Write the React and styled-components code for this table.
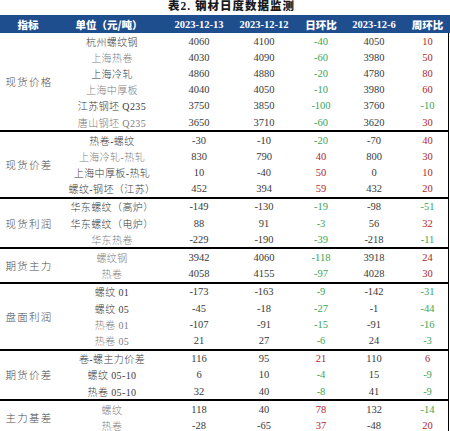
import React from "react";
import styled, { createGlobalStyle } from "styled-components";

const GlobalStyle = createGlobalStyle`
  body {
    margin: 0;
    background: #fff;
  }
`;

const COLS = "56px 106px 74px 56px 58px 48px 51px";

const groups = [
  {
    name: "现货价格",
    rows: [
      ["杭州螺纹钢", 0, 4060, 4100, -40, 4050, 10],
      ["上海热卷", 1, 4030, 4090, -60, 3980, 50],
      ["上海冷轧", 0, 4860, 4880, -20, 4780, 80],
      ["上海中厚板", 1, 4040, 4050, -10, 3980, 60],
      ["江苏钢坯 Q235", 0, 3750, 3850, -100, 3760, -10],
      ["唐山钢坯 Q235", 1, 3650, 3710, -60, 3620, 30],
    ],
  },
  {
    name: "现货价差",
    rows: [
      ["热卷-螺纹", 0, -30, -10, -20, -70, 40],
      ["上海冷轧-热轧", 1, 830, 790, 40, 800, 30],
      ["上海中厚板-热轧", 0, 10, -40, 50, 0, 10],
      ["螺纹-钢坯（江苏）", 0, 452, 394, 59, 432, 20],
    ],
  },
  {
    name: "现货利润",
    rows: [
      ["华东螺纹（高炉）", 0, -149, -130, -19, -98, -51],
      ["华东螺纹（电炉）", 0, 88, 91, -3, 56, 32],
      ["华东热卷", 1, -229, -190, -39, -218, -11],
    ],
  },
  {
    name: "期货主力",
    rows: [
      ["螺纹钢", 1, 3942, 4060, -118, 3918, 24],
      ["热卷", 1, 4058, 4155, -97, 4028, 30],
    ],
  },
  {
    name: "盘面利润",
    rows: [
      ["螺纹 01", 0, -173, -163, -9, -142, -31],
      ["螺纹 05", 0, -45, -18, -27, -1, -44],
      ["热卷 01", 1, -107, -91, -15, -91, -16],
      ["热卷 05", 1, 21, 27, -6, 24, -3],
    ],
  },
  {
    name: "期货价差",
    rows: [
      ["卷-螺主力价差", 0, 116, 95, 21, 110, 6],
      ["螺纹 05-10", 0, 6, 10, -4, 15, -9],
      ["热卷 05-10", 0, 32, 40, -8, 41, -9],
    ],
  },
  {
    name: "主力基差",
    rows: [
      ["螺纹", 1, 118, 40, 78, 132, -14],
      ["热卷", 1, -28, -65, 37, -48, 20],
    ],
  },
];

const headers = ["指标", "单位（元/吨）", "2023-12-13", "2023-12-12", "日环比", "2023-12-6", "周环比"];

export default function App() {
  return (
    <>
      <GlobalStyle />
      <Page>
        <Title>表2. 钢材日度数据监测</Title>
        <Header>
          {headers.map((h, i) => (
            <HeadCell key={h} $date={/\d/.test(h)} $shift={i === 6}>
              {h}
            </HeadCell>
          ))}
        </Header>
        {groups.map((g, gi) => (
          <Group key={g.name} $rows={g.rows.length} $first={gi === 0}>
            <GroupLabel $span={g.rows.length}>{g.name}</GroupLabel>
            {g.rows.map(([label, dim, a, b, d, c, w], ri) => (
              <React.Fragment key={ri}>
                <Unit $dim={dim}>{label}</Unit>
                <Num>{a}</Num>
                <Num>{b}</Num>
                <Change $up={d > 0}>{d}</Change>
                <Num>{c}</Num>
                <Change $up={w > 0} $shift>
                  {w}
                </Change>
              </React.Fragment>
            ))}
          </Group>
        ))}
      </Page>
    </>
  );
}

const Page = styled.div`
  width: 450px;
  height: 431px;
  overflow: hidden;
  font-family: "Liberation Serif", "Noto Sans CJK SC", serif;
`;

const Title = styled.div`
  height: 15px;
  padding-left: 168px;
  font-family: "Liberation Serif", "Noto Sans CJK SC", serif;
  font-size: 11.5px;
  font-weight: 900;
  line-height: 12px;
  color: #1a1a1a;
  letter-spacing: 1px;
`;

const Header = styled.div`
  display: grid;
  grid-template-columns: ${COLS};
  height: 18px;
  background: #1f4e8f;
  align-items: center;
`;

const HeadCell = styled.div`
  text-align: center;
  color: #fff;
  font-size: 10.5px;
  font-family: ${(p) =>
    p.$date ? `"Liberation Serif", serif` : `"Noto Sans CJK SC", sans-serif`};
  font-weight: ${(p) => (p.$date ? 700 : 900)};
  padding-left: ${(p) => (p.$shift ? "8px" : "0")};
`;

const Group = styled.div`
  display: grid;
  grid-template-columns: ${COLS};
  grid-template-rows: repeat(${(p) => p.$rows}, 16.2px);
  width: 448px;
  border-right: 1px solid #000;
  border-top: ${(p) => (p.$first ? "none" : "2px solid #000")};
  align-items: center;
`;

const GroupLabel = styled.div`
  grid-column: 1;
  grid-row: 1 / span ${(p) => p.$span};
  align-self: center;
  text-align: center;
  font-family: "Noto Sans CJK SC", sans-serif;
  font-size: 10.5px;
  font-weight: 300;
  letter-spacing: 1.2px;
  color: #4a4a4a;
  padding-left: 2px;
`;

const Unit = styled.div`
  grid-column: 2;
  text-align: center;
  padding-left: 6px;
  font-family: "Liberation Serif", "Noto Sans CJK SC", serif;
  font-size: 10px;
  font-weight: 300;
  letter-spacing: 0.4px;
  color: ${(p) => (p.$dim ? "#808080" : "#3a3a3a")};
`;

const Num = styled.div`
  text-align: center;
  font-size: 10.5px;
  color: #3a3a3a;
`;

const Change = styled(Num)`
  color: ${(p) => (p.$up ? "#b3262b" : "#3aa655")};
  padding-left: ${(p) => (p.$shift ? "8px" : "0")};
`;
